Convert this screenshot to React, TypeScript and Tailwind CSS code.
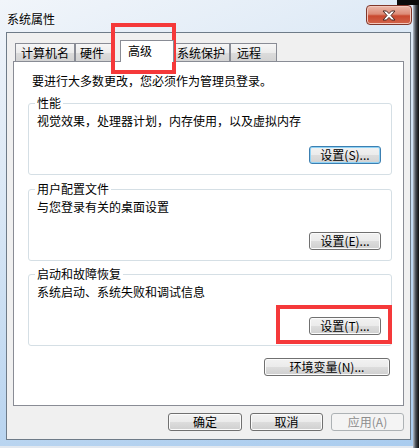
import React from 'react';

const font = "font-['Noto_Sans_CJK_SC','Noto_Sans',sans-serif]";

const btnBase =
  'flex h-[18px] items-center justify-center rounded-[3px] border text-[12px] leading-[16px]';
const btnNormal =
  'border-[#707070] bg-[linear-gradient(to_bottom,#f2f2f2_0%,#ebebeb_50%,#dddddd_50%,#cfcfcf_100%)] text-black shadow-[inset_0_0_0_1px_#fbfbfb]';
const btnFocused =
  'border-[#3c7fb1] bg-[linear-gradient(to_bottom,#f2f2f2_0%,#ebebeb_50%,#dddddd_50%,#d2d2d2_100%)] text-black shadow-[inset_0_0_0_1px_#8fd3f6]';
const btnDisabled = 'border-[#adb2b5] bg-[#f4f4f4] text-[#8d8d8d]';

function Button({ label, className, variant = 'normal' }: { label: string; className: string; variant?: 'normal' | 'focused' | 'disabled' }) {
  const look = variant === 'focused' ? btnFocused : variant === 'disabled' ? btnDisabled : btnNormal;
  return <button className={`${btnBase} ${look} ${className}`}>{label}</button>;
}

function GroupBox({ title, desc, button, focused, className }: { title: string; desc: string; button: string; focused?: boolean; className: string }) {
  return (
    <fieldset className={`rounded-[3px] border border-[#d5dfe5] pb-[10px] pl-[6px] pr-[10px] ${className}`}>
      <legend className="px-[2px] text-[12px] leading-[14px] text-black">{title}</legend>
      <p className="mt-[3px] pl-[2px] text-[12px] leading-[16px] text-black">{desc}</p>
      <div className="mt-[17px] flex justify-end">
        <Button label={button} className="w-[72px]" variant={focused ? 'focused' : 'normal'} />
      </div>
    </fieldset>
  );
}

const tabInactive =
  'h-[18px] border border-b-0 border-[#898c95] bg-[linear-gradient(to_bottom,#f6f6f6_0%,#ececec_50%,#dcdcdc_50%,#d3d3d3_100%)] pt-[1px] text-[12px] leading-[16px] text-black';

export default function App() {
  return (
    <div className={`relative flex h-[448px] w-[419px] overflow-hidden bg-[#e2e8ef] ${font}`}>
      {/* window */}
      <div className="flex h-[446px] w-[413px] flex-col bg-[linear-gradient(160deg,#f1f5fa_0%,#d9e7f5_35%,#bcd6f0_70%,#a9ccef_100%)]">
        {/* title bar */}
        <div className="flex h-[32px] items-start justify-between">
          <span className="pl-[7px] pt-[11px] text-[12px] leading-[16px] text-black [text-shadow:0_0_6px_#ffffff]">
            系统属性
          </span>
          <div className="mr-[1px] mt-[5px] flex h-[20px] w-[46px] items-center justify-center rounded-[4px] border border-[#80372a] bg-[linear-gradient(to_bottom,#ecb9ab_0%,#dd8c77_45%,#c9492f_55%,#d2654b_100%)] shadow-[inset_0_0_0_1px_#f3c8bd]">
            <svg width="14" height="11" viewBox="0 0 14 11">
              <path
                d="M1 1 H4.5 L7 3.6 L9.5 1 H13 L9 5.5 L13 10 H9.5 L7 7.4 L4.5 10 H1 L5 5.5 Z"
                fill="#ffffff"
                stroke="#4a2a25"
                strokeWidth="1"
                strokeLinejoin="round"
              />
            </svg>
          </div>
        </div>

        {/* client area */}
        <div className="mb-[6px] ml-[6px] mr-[2px] flex flex-1 flex-col border border-[#6e7b88] bg-[#f0f0f0] px-[6px] pt-[7px]">
          {/* tabs */}
          <div className="flex h-[21px] items-end pl-[2px]">
            <div className={`${tabInactive} w-[60px] pl-[5px]`}>计算机名</div>
            <div className={`${tabInactive} w-[37px] pl-[4px]`}>硬件</div>
            <div className="relative z-10 -mb-[1px] ml-[8px] h-[22px] w-[54px] border border-b-0 border-[#898c95] bg-white pl-[7px] pt-[2px] text-[12px] leading-[16px] text-black">
              高级
            </div>
            <div className={`${tabInactive} w-[56px] pl-[2px]`}>系统保护</div>
            <div className={`${tabInactive} w-[47px] pl-[6px]`}>远程</div>
          </div>

          {/* tab panel */}
          <div className="flex h-[345px] flex-col border border-[#898c95] bg-white pl-[14px] pr-[11px] pt-[11px]">
            <p className="ml-[4px] text-[12px] leading-[16px] text-black">要进行大多数更改，您必须作为管理员登录。</p>
            <GroupBox
              className="mt-[7px]"
              title="性能"
              desc="视觉效果，处理器计划，内存使用，以及虚拟内存"
              button="设置(S)..."
              focused
            />
            <GroupBox className="mt-[7px]" title="用户配置文件" desc="与您登录有关的桌面设置" button="设置(E)..." />
            <GroupBox className="mt-[6px]" title="启动和故障恢复" desc="系统启动、系统失败和调试信息" button="设置(T)..." />
            <div className="mt-[12px] flex justify-end pr-[2px]">
              <Button label="环境变量(N)..." className="w-[126px]" />
            </div>
          </div>

          {/* dialog buttons */}
          <div className="mt-[7px] flex justify-end gap-[8px]">
            <Button label="确定" className="w-[74px]" />
            <Button label="取消" className="w-[73px]" />
            <Button label="应用(A)" className="w-[73px]" variant="disabled" />
          </div>
        </div>
      </div>

      {/* shadow strip at the right */}
      <div className="h-full w-[6px] bg-[linear-gradient(to_right,#b4bcc6_0%,#4a5058_45%,#0b0b0b_100%)]" />

      {/* black corner above close button */}
      <div className="absolute right-0 top-0 h-[5px] w-[22px] bg-[#0b0b0b]" />

      {/* red annotation boxes */}
      <div className="absolute left-[111px] top-[23px] h-[51px] w-[65px] border-4 border-[#f5393a]" />
      <div className="absolute left-[276px] top-[305px] h-[39px] w-[116px] border-4 border-[#f5393a]" />
    </div>
  );
}
